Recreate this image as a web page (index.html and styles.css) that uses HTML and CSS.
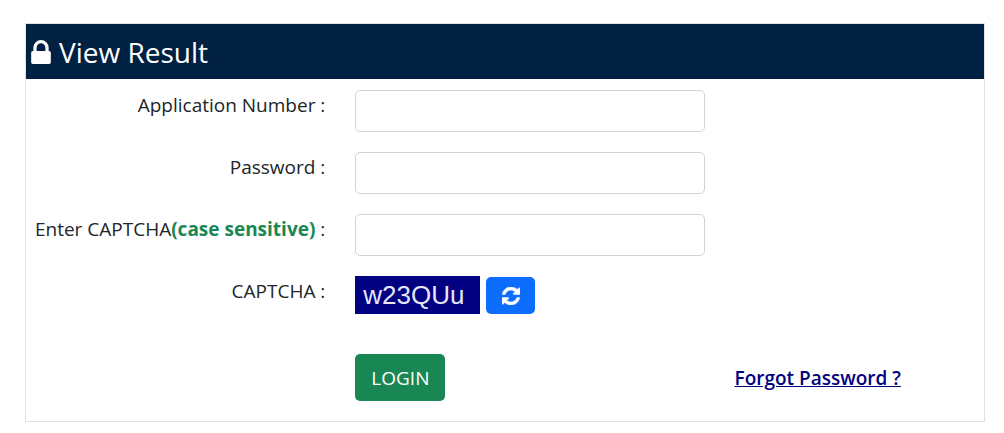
FILE: index.html
```html
<!DOCTYPE html>
<html lang="en">

<head>
    <meta charset="UTF-8">
    <meta name="viewport" content="width=device-width, initial-scale=1.0">
    <link rel="stylesheet" href="styles.css">
    <title>View Result</title>
</head>

<body>

    <main class="card">
        <h1 class="card-header">
            <svg class="lock-icon" viewBox="0 0 1152 1408" aria-hidden="true">
                <path fill="currentColor" d="M320 640h512V448q0-106-75-181t-181-75-181 75-75 181v192zm832 96v576q0 40-28 68t-68 28H96q-40 0-68-28t-28-68V736q0-40 28-68t68-28h32V448q0-184 132-316T576 0t316 132 132 316v192h32q40 0 68 28t28 68z"/>
            </svg>
            View Result
        </h1>

        <form class="card-body">
            <div class="form-row">
                <label class="form-label" for="application-number">Application Number :</label>
                <input class="form-control" type="text" id="application-number">
            </div>

            <div class="form-row">
                <label class="form-label" for="password">Password :</label>
                <input class="form-control" type="password" id="password">
            </div>

            <div class="form-row">
                <label class="form-label" for="captcha">Enter CAPTCHA<b class="hint">(case sensitive)</b> :</label>
                <input class="form-control" type="text" id="captcha">
            </div>

            <div class="form-row">
                <span class="form-label">CAPTCHA :</span>
                <div class="captcha">
                    <span class="captcha-code">w23QUu</span>
                    <button class="btn btn-refresh" type="button" aria-label="Refresh CAPTCHA">
                        <svg class="refresh-icon" viewBox="0 0 1536 1536" aria-hidden="true">
                            <path fill="currentColor" stroke="currentColor" stroke-width="50" d="M1511 928q0 5-1 7-64 268-268 434.500T764 1536q-146 0-282.500-55T238 1324l-129 129q-19 19-45 19t-45-19-19-45V960q0-26 19-45t45-19h448q26 0 45 19t19 45-19 45l-137 137q71 66 161 102t187 36q134 0 250-65t186-179q11-17 53-117 8-23 30-23h192q13 0 22.500 9.500t9.500 22.500zm25-800v448q0 26-19 45t-45 19h-448q-26 0-45-19t-19-45 19-45l138-138Q969 256 768 256q-134 0-250 65T332 500q-11 17-53 117-8 23-30 23H50q-13 0-22.500-9.500T18 608v-7q65-268 270-434.500T768 0q146 0 284 55.500T1297 212l130-129q19-19 45-19t45 19 19 45z"/>
                        </svg>
                    </button>
                </div>
            </div>

            <div class="form-row form-actions">
                <button class="btn btn-login" type="submit">LOGIN</button>
                <a class="forgot-link" href="#">Forgot Password ?</a>
            </div>
        </form>
    </main>

</body>

</html>
```

FILE: styles.css
```css
* {
    box-sizing: border-box;
}

body {
    margin: 0;
    padding: 23px 19px 11px 25px;
    background-color: #fff;
    color: #212529;
    font-family: "Segoe UI", "Open Sans", "Noto Sans", sans-serif;
    font-size: 19px;
    line-height: 30px;
}

.card {
    border: 1px solid #dee2e6;
}

.card-header {
    display: flex;
    align-items: center;
    gap: 8px;
    margin: 0;
    padding: 8px 5px 7px;
    background-color: #002142;
    color: #fff;
    font-size: 28px;
    font-weight: 400;
    line-height: 40px;
}

.lock-icon {
    width: 20px;
    height: 24px;
}

.card-body {
    display: grid;
    gap: 20px;
    padding: 11px 0 20px;
}

.form-row {
    display: grid;
    grid-template-columns: 6fr 7fr 5fr;
    column-gap: 30px;
}

.form-label {
    text-align: right;
    white-space: nowrap;
}

.hint {
    color: #198754;
}

.form-control {
    width: 100%;
    height: 42px;
    padding: 6px 12px;
    border: 1px solid #ced4da;
    border-radius: 5px;
    background-color: #fff;
    color: inherit;
    font: inherit;
}

.captcha {
    display: flex;
    align-items: flex-end;
    gap: 6px;
}

.captcha-code {
    padding: 0 16px 0 8px;
    background-color: #000080;
    color: #e6e6fa;
    font-family: "Liberation Sans", Arial, sans-serif;
    font-size: 26px;
    line-height: 38px;
}

.btn {
    border: 0;
    border-radius: 5px;
    color: #fff;
    font: inherit;
    cursor: pointer;
}

.btn-refresh {
    display: flex;
    align-items: center;
    justify-content: center;
    width: 49px;
    height: 37px;
    padding: 0;
    background-color: #0d6efd;
}

.refresh-icon {
    width: 18px;
    height: 18px;
}

.form-actions {
    align-items: center;
    margin-top: 20px;
}

.btn-login {
    grid-column: 2;
    justify-self: start;
    height: 47px;
    padding: 0 16px;
    background-color: #198754;
}

.forgot-link {
    color: #000080;
    font-weight: 600;
}
```
